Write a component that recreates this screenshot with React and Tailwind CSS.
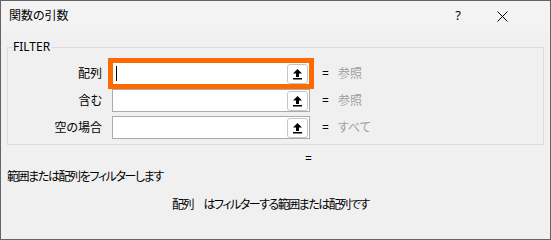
const ROWS = [
  { label: '配列', value: '参照', active: true },
  { label: '含む', value: '参照' },
  { label: '空の場合', value: 'すべて' },
];

function RefButton() {
  return (
    <div className="absolute right-[1px] top-[1px] flex h-[20px] w-[21px] items-center justify-center rounded-[3px] border border-[#c6c6c6] bg-white">
      <svg width="11" height="12" viewBox="0 0 11 12">
        <path d="M5.5 1 L10 5.5 H7 V9 H4 V5.5 H1 Z" fill="#000" />
        <rect x="1" y="10" width="9" height="1.5" fill="#000" />
      </svg>
    </div>
  );
}

export default function App() {
  return (
    <div className="flex h-[240px] w-[551px] flex-col border border-[#646464] bg-[#f0f0f0] text-[12px] text-black font-['Noto_Sans','Noto_Sans_CJK_JP',sans-serif] [font-feature-settings:'palt']">
      {/* Title bar */}
      <div className="flex h-[30px] items-center bg-[#f3f3f3] pl-[8px]">
        <span className="leading-[16px]">関数の引数</span>
        <span className="ml-auto mr-[36px] text-[13px]">?</span>
        <svg className="mr-[42px]" width="11" height="11" viewBox="0 0 11 11">
          <path d="M0.5 0.5 L10.5 10.5 M10.5 0.5 L0.5 10.5" stroke="#000" strokeWidth="1" />
        </svg>
      </div>

      <div className="px-[6px] pt-[8px]">
        <fieldset className="border border-[#dcdcdc] pb-[5px]">
          <legend className="ml-[4px] px-[1px] leading-[16px]">FILTER</legend>
          <div className="flex flex-col gap-[4px] pt-[7px]">
            {ROWS.map((r) => (
              <div key={r.label} className="flex h-[23px] items-center">
                <span className="w-[94px] text-right leading-[16px]">{r.label}</span>
                <div
                  className={
                    r.active
                      ? 'relative ml-[10px] h-[23px] w-[198px] border border-[#ff6a00] bg-white outline-4 outline-[#ff6a00]'
                      : 'relative ml-[10px] h-[23px] w-[198px] border border-[#ababab] bg-white'
                  }
                >
                  {r.active && <div className="absolute left-[3px] top-[3px] h-[15px] w-px bg-black" />}
                  <RefButton />
                </div>
                <span className="ml-[12px] leading-[16px]">=</span>
                <span className="ml-[9px] leading-[16px] text-[#a0a0a0]">{r.value}</span>
              </div>
            ))}
          </div>
        </fieldset>

        <p className="mt-[6px] pl-[298px] leading-[16px]">=</p>
        <p className="mt-[2px] leading-[16px] tracking-[-1.4px]">範囲または配列をフィルターします</p>
        <p className="mt-[12px] pl-[165px] leading-[16px] tracking-[-1.5px]">配列　はフィルターする範囲または配列です</p>
      </div>
    </div>
  );
}
